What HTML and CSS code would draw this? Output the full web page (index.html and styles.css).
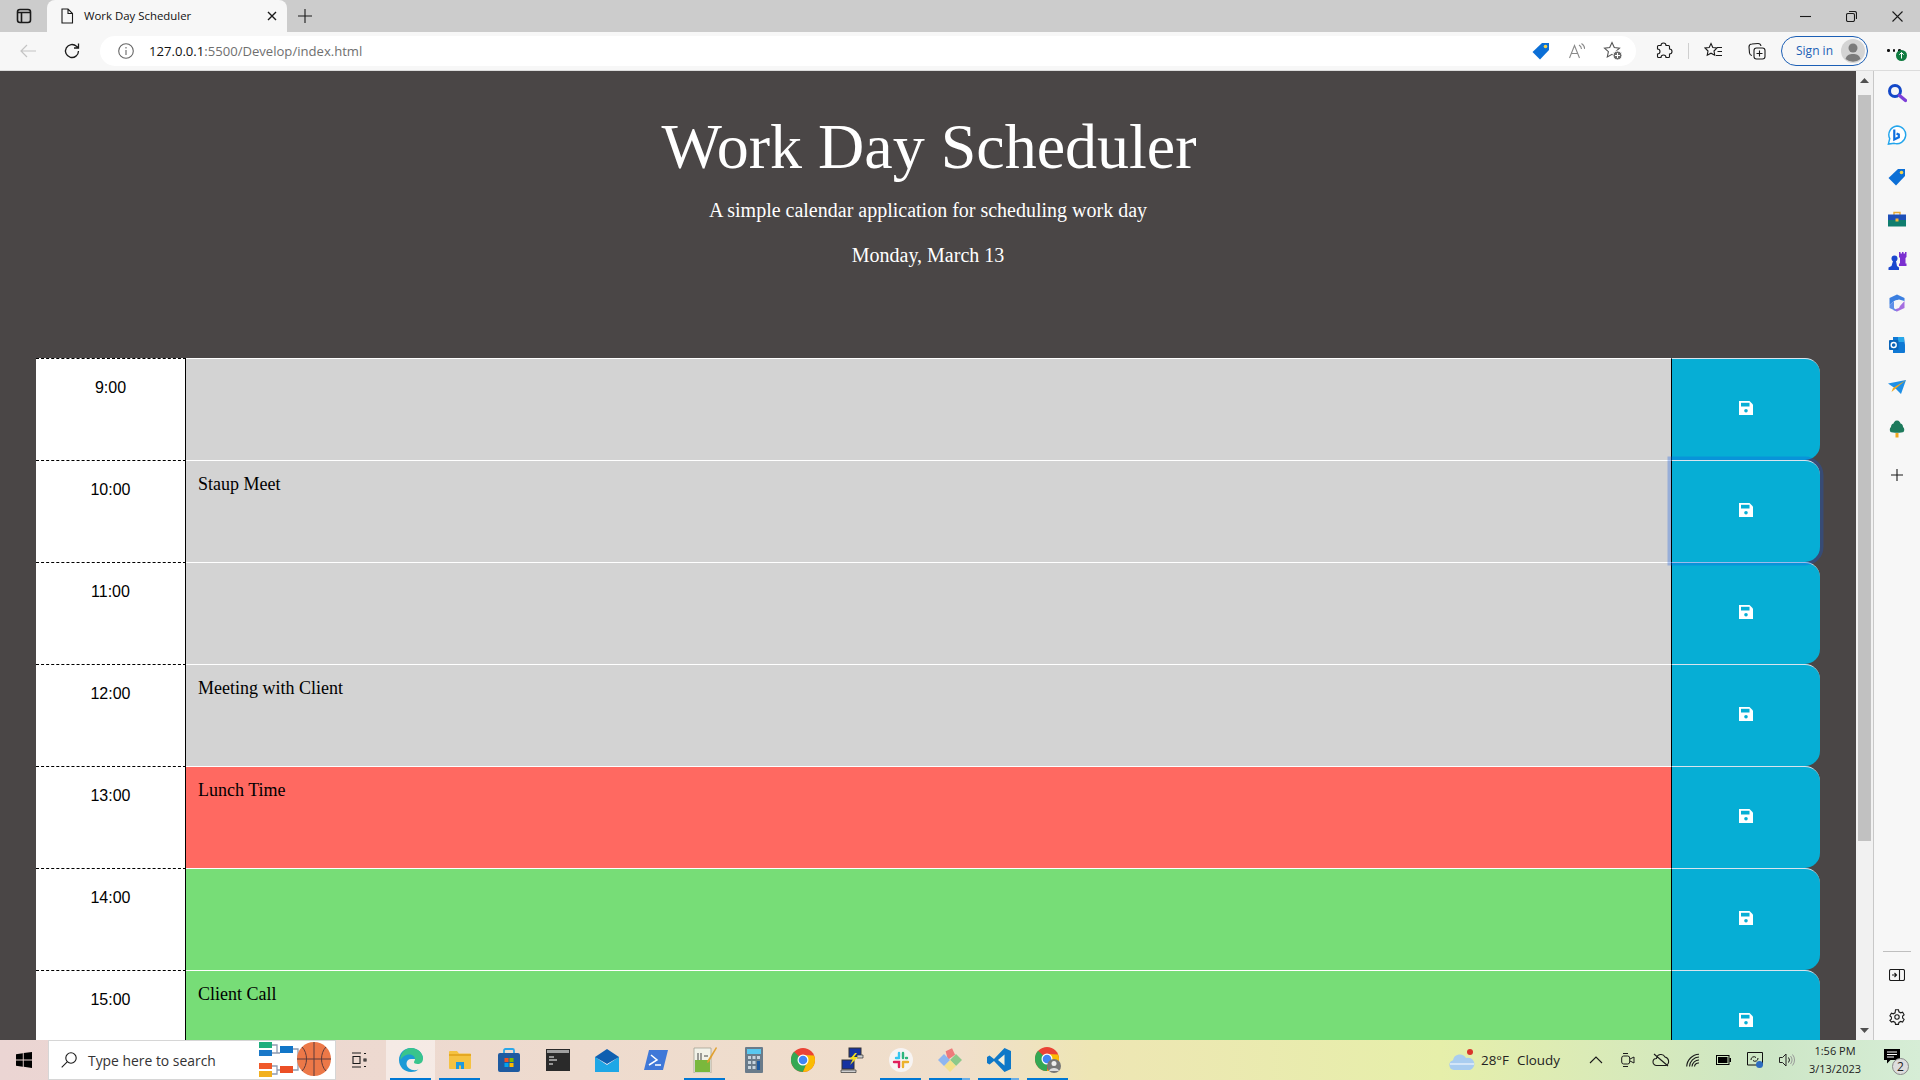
FILE: index.html
```html
<!DOCTYPE html>
<html lang="en">
<head>
<meta charset="utf-8">
<title>Work Day Scheduler</title>
<link rel="stylesheet" href="styles.css">
</head>
<body>
<div class="tabstrip">
  <div class="tab-side"><svg width="16" height="16" viewBox="0 0 16 16" class="line heavy"><rect x="1.500" y="1.500" width="13" height="13" rx="2.500"/><path d="M2 4.500h12M5.500 5v9" /></svg></div>
  <div class="tab">
    <svg width="14" height="16" viewBox="0 0 14 16" class="line"><path d="M2 1h6l4.500 4.500V15H2zM8 1v4.500h4.500"/></svg>
    <span class="tab-title">Work Day Scheduler</span>
    <svg class="tab-close line" width="10" height="10" viewBox="0 0 10 10"><path d="M1 1l8 8M9 1l-8 8"/></svg>
  </div>
  <svg class="tab-new line" width="14" height="14" viewBox="0 0 14 14"><path d="M7 0v14M0 7h14"/></svg>
  <div class="win-buttons">
    <svg width="11" height="11" viewBox="0 0 11 11" class="line"><path d="M0 5.500h11"/></svg>
    <svg width="11" height="11" viewBox="0 0 11 11" class="line"><rect x=".5" y="2.500" width="8" height="8" rx="1.500"/><path d="M3 .5h5.500a2 2 0 0 1 2 2V8"/></svg>
    <svg width="11" height="11" viewBox="0 0 11 11" class="line"><path d="M.5.5l10 10M10.500.5l-10 10"/></svg>
  </div>
</div>
<div class="toolbar">
  <svg class="tb-back" width="18" height="16" viewBox="0 0 18 16"><path d="M17 8H2M8 2L2 8l6 6"/></svg>
  <svg class="tb-reload line" width="18" height="18" viewBox="0 0 18 18"><path d="M15.500 9a6.500 6.500 0 1 1-2-4.700L15.500 6M15.500 1.500V6H11"/></svg>
  <div class="address">
    <svg class="addr-info" width="16" height="16" viewBox="0 0 16 16"><circle cx="8" cy="8" r="7.300"/><path d="M8 7v5M8 4v1.600"/></svg>
    <span class="url"><span class="url-host">127.0.0.1</span>:5500/Develop/index.html</span>
    <svg class="addr-tag" width="18" height="18" viewBox="0 0 18 18"><path d="M10 1h7v7l-9 9.500L.5 10z" fill="#0c6fd6"/><circle cx="13.500" cy="4.500" r="1.800" fill="#f5d24b"/></svg>
    <svg class="addr-read" width="16" height="16" viewBox="0 0 16 16"><path d="M.5 15L5.500 2.500 10.500 15M2.500 10.500h6M10 2a5 5 0 0 1 2.500 4M12.500.5A7 7 0 0 1 15.800 6"/></svg>
    <svg class="addr-fav" width="20" height="20" viewBox="0 0 20 20"><path class="star" d="M9 1.500l2.300 5 5.200.6-3.900 3.600 1.100 5.300-4.700-2.700-4.700 2.700 1.100-5.300L1.500 7.100l5.200-.6z"/><circle cx="14.500" cy="14.500" r="4.500" fill="#6a6a6a" stroke="#fff"/><path d="M14.500 12v5M12 14.500h5" stroke="#fff" fill="none"/></svg>
  </div>
  <svg class="tb-ext line" width="18" height="18" viewBox="0 0 18 18"><path d="M6 3.500a2.500 2.500 0 0 1 5 0h2.500a1 1 0 0 1 1 1V7a2.500 2.500 0 0 1 0 5v2.500a1 1 0 0 1-1 1H11a2.500 2.500 0 0 0-5 0H3.500a1 1 0 0 1-1-1V12a2.500 2.500 0 0 0 0-5V4.500a1 1 0 0 1 1-1z"/></svg>
  <span class="tb-sep"></span>
  <svg class="tb-favs line" width="19" height="18" viewBox="0 0 19 18"><path d="M7 1.500l1.800 4 4.200.5-3 3 .8 4.300L7 11.200l-3.800 2.100.8-4.300-3-3 4.200-.5zM13 5.500h5M13.500 9.500h4.500M12 13.500h6"/></svg>
  <svg class="tb-coll line" width="18" height="18" viewBox="0 0 18 18"><rect x="6" y="6" width="11" height="11" rx="2.500"/><path d="M11.500 8.500v6M8.500 11.500h6M4 13.500A3 3 0 0 1 1.500 11L1 5a3 3 0 0 1 3-3l6-.5a3 3 0 0 1 3 2.500"/></svg>
  <div class="signin"><span>Sign in</span><svg width="24" height="24" viewBox="0 0 24 24"><circle cx="12" cy="12" r="12" fill="#d4d4d4"/><circle cx="12" cy="9" r="4.500" fill="#7b7b7b"/><path d="M4.500 20c1-4 4-5 7.500-5s6.500 1 7.500 5a12 12 0 0 1-15 0z" fill="#7b7b7b"/></svg></div>
  <div class="tb-more"><i></i><i></i><i></i><svg class="update" width="11" height="11" viewBox="0 0 11 11"><circle cx="5.500" cy="5.500" r="5.500" fill="#107c41"/><path d="M5.500 8.500v-6M3.300 4.700l2.200-2.200 2.200 2.200" stroke="#fff" fill="none"/></svg></div>
</div>
<div class="viewport">
  <main class="page">
    <header class="jumbo">
      <h1 class="title">Work Day Scheduler</h1>
      <p class="lead">A simple calendar application for scheduling work day</p>
      <p class="date">Monday, March 13</p>
    </header>
    <section class="rows">
      <div class="row"><div class="hour">9:00</div><textarea class="note past"></textarea><button class="save"><svg class="disk" width="14" height="14" viewBox="0 0 14 14"><path d="M0 0h10.500L14 3.500V14H0z" fill="#fff"/><rect x="2" y="1.800" width="8.500" height="3.700" fill="#06aed5"/><circle cx="7" cy="9.700" r="1.800" fill="#06aed5"/></svg></button></div>
      <div class="row"><div class="hour">10:00</div><textarea class="note past">Staup Meet</textarea><button class="save focused"><svg class="disk" width="14" height="14" viewBox="0 0 14 14"><path d="M0 0h10.500L14 3.500V14H0z" fill="#fff"/><rect x="2" y="1.800" width="8.500" height="3.700" fill="#06aed5"/><circle cx="7" cy="9.700" r="1.800" fill="#06aed5"/></svg></button></div>
      <div class="row"><div class="hour">11:00</div><textarea class="note past"></textarea><button class="save"><svg class="disk" width="14" height="14" viewBox="0 0 14 14"><path d="M0 0h10.500L14 3.500V14H0z" fill="#fff"/><rect x="2" y="1.800" width="8.500" height="3.700" fill="#06aed5"/><circle cx="7" cy="9.700" r="1.800" fill="#06aed5"/></svg></button></div>
      <div class="row"><div class="hour">12:00</div><textarea class="note past">Meeting with Client</textarea><button class="save"><svg class="disk" width="14" height="14" viewBox="0 0 14 14"><path d="M0 0h10.500L14 3.500V14H0z" fill="#fff"/><rect x="2" y="1.800" width="8.500" height="3.700" fill="#06aed5"/><circle cx="7" cy="9.700" r="1.800" fill="#06aed5"/></svg></button></div>
      <div class="row"><div class="hour">13:00</div><textarea class="note present">Lunch Time</textarea><button class="save"><svg class="disk" width="14" height="14" viewBox="0 0 14 14"><path d="M0 0h10.500L14 3.500V14H0z" fill="#fff"/><rect x="2" y="1.800" width="8.500" height="3.700" fill="#06aed5"/><circle cx="7" cy="9.700" r="1.800" fill="#06aed5"/></svg></button></div>
      <div class="row"><div class="hour">14:00</div><textarea class="note future"></textarea><button class="save"><svg class="disk" width="14" height="14" viewBox="0 0 14 14"><path d="M0 0h10.500L14 3.500V14H0z" fill="#fff"/><rect x="2" y="1.800" width="8.500" height="3.700" fill="#06aed5"/><circle cx="7" cy="9.700" r="1.800" fill="#06aed5"/></svg></button></div>
      <div class="row"><div class="hour">15:00</div><textarea class="note future">Client Call</textarea><button class="save"><svg class="disk" width="14" height="14" viewBox="0 0 14 14"><path d="M0 0h10.500L14 3.500V14H0z" fill="#fff"/><rect x="2" y="1.800" width="8.500" height="3.700" fill="#06aed5"/><circle cx="7" cy="9.700" r="1.800" fill="#06aed5"/></svg></button></div>
    </section>
  </main>
  <div class="scrollbar">
    <svg class="arrow-up" width="9" height="5" viewBox="0 0 9 5"><path d="M4.500 0L9 5H0z" fill="#505050"/></svg>
    <div class="thumb"></div>
    <svg class="arrow-down" width="9" height="5" viewBox="0 0 9 5"><path d="M0 0h9L4.500 5z" fill="#505050"/></svg>
  </div>
  <aside class="sidebar">
    <svg width="20" height="20" viewBox="0 0 20 20"><circle cx="8" cy="8" r="5.500" fill="none" stroke="#1348c8" stroke-width="3"/><path d="M12.500 12.500l6 5" stroke="#7d3fd8" stroke-width="3.400" stroke-linecap="round"/></svg>
    <svg width="22" height="22" viewBox="0 0 22 22"><path d="M11 1a9.800 9.800 0 1 1-3 19.200L1.500 21 3 15A9.800 9.800 0 0 1 11 1z" fill="#fff" stroke="#23a5ec" stroke-width="1.600"/><path d="M8 5v11l5-2.500v-3L10.500 9.500" fill="none" stroke="#0f6fe0" stroke-width="2.400"/></svg>
    <svg width="18" height="18" viewBox="0 0 18 18"><path d="M10 1h7v7l-9 9.500L.5 10z" fill="#0c6fd6"/><circle cx="13.500" cy="4.500" r="1.800" fill="#f5d24b"/></svg>
    <svg width="18" height="16" viewBox="0 0 18 16"><path d="M6 4V1.500h6V4" fill="none" stroke="#e8a832" stroke-width="1.400"/><rect y="3.500" width="18" height="6" fill="#1d4fb8"/><rect y="9" width="18" height="6.500" fill="#0f7d6e"/><rect x="7.500" y="7.500" width="3" height="3" fill="#f3b83b"/></svg>
    <svg width="19" height="20" viewBox="0 0 19 20"><path d="M11 1h1.500v1.500H14V1h1.500v1.500H17V1h1.500v5l-1 1v5.500h1V15H11v-2.500h1V7l-1-1z" fill="#7b2fd0"/><circle cx="6.500" cy="7.500" r="3" fill="#1a47cf"/><path d="M5 10h3l1 5 2 1.500V19H.5v-2.500l3-1.500z" fill="#1a47cf"/></svg>
    <svg width="16" height="18" viewBox="0 0 16 18"><path d="M8 .5L15.500 4v3L10 5.500 5 7l-4.500 4V4z" fill="#3b7fe0"/><path d="M15.500 7v7L8 17.500 4 16l6-2 1-2z" fill="#a56ee0"/><path d="M.5 11L5 7v7l3 3.500L.5 14z" fill="#5f8fe8"/><circle cx="8" cy="9" r="2.800" fill="#f7f7f7"/></svg>
    <svg width="16" height="16" viewBox="0 0 16 16"><path d="M4 0h11l1 8v7a1 1 0 0 1-1 1H4z" fill="#0f78d4"/><path d="M9 0h6v5H9z" fill="#28a8ea"/><rect y="3" width="9.500" height="10" rx="1" fill="#0a64b8"/><circle cx="4.700" cy="8" r="2.500" fill="none" stroke="#fff" stroke-width="1.400"/></svg>
    <svg width="18" height="14" viewBox="0 0 18 14"><path d="M0 3.500L18 0 13 14 8 9z" fill="#1e8fe6"/><path d="M18 0L5 8l-1.500 4z" fill="#f0a81e"/></svg>
    <svg width="16" height="18" viewBox="0 0 16 18"><path d="M8 .5c2.500 0 3 2 3.500 3 2 .5 2.500 2.500 2.500 3.500 1.500 1 1.700 3.600.5 5-1 1-11.500 1-13 0C.5 10.600.5 8 2 7c0-1 .5-3 2.500-3.500C5 2.500 5.500.5 8 .5z" fill="#1d7a5c"/><rect x="6.500" y="13" width="3" height="4.500" fill="#f0a81e"/></svg>
    <svg class="line side-plus" width="12" height="12" viewBox="0 0 12 12"><path d="M6 0v12M0 6h12"/></svg>
    <span class="side-sep"></span>
    <svg class="line side-panel" width="16" height="12" viewBox="0 0 16 12"><rect x=".5" y=".5" width="15" height="11" rx="1.500"/><path d="M10.500 1v10M3 6h4.500M5.500 4l2 2-2 2"/></svg>
    <svg class="line side-gear" width="16" height="16" viewBox="0 0 16 16"><circle cx="8" cy="8" r="2.200"/><path d="M6.500.8h3l.4 2 1.800 1 1.900-.6 1.500 2.600-1.500 1.300v2l1.500 1.300-1.500 2.600-1.900-.6-1.800 1-.4 2h-3l-.4-2-1.800-1-1.900.6L.9 11.400l1.500-1.300v-2L.9 6.800l1.500-2.600 1.900.6 1.800-1z"/></svg>
  </aside>
</div>
<footer class="taskbar">
  <div class="start"><svg width="16" height="16" viewBox="0 0 16 16"><path d="M0 2.300l6.800-1V7.600H0zM7.700 1.100L16 0v7.600H7.700zM0 8.400h6.800v6.300l-6.800-1zM7.700 8.400H16V16l-8.300-1.200z" fill="#000"/></svg></div>
  <div class="search">
    <svg class="line" width="16" height="16" viewBox="0 0 16 16"><circle cx="10" cy="6" r="5.200"/><path d="M6.200 9.800L.7 15.300"/></svg>
    <span class="search-text">Type here to search</span>
    <svg class="bracket" width="72" height="36" viewBox="0 0 72 36"><rect width="13" height="6" fill="#1fae7e"/><rect y="8" width="13" height="6" fill="#1a78c8"/><rect y="21" width="13" height="6" fill="#f0592a"/><rect y="29" width="13" height="6" fill="#f2b01e"/><rect x="21" y="4" width="13" height="7" fill="#1276c8"/><rect x="21" y="24" width="13" height="7" fill="#ec4f25"/><path d="M13 3h5v8h3M13 11h5M13 24h5v8M13 32h5v-4h3M34 7h5v21h-5M39 17h4" fill="none" stroke="#8f9bb0" stroke-width="1.300"/><circle cx="55" cy="17" r="17" fill="#ec7848"/><path d="M38 17h34M55 0v34M43 5c6 6 6 18 0 24M67 5c-6 6-6 18 0 24" fill="none" stroke="#5c3a3a" stroke-width="1"/></svg>
  </div>
  <div class="task-item task-view"><svg class="line" width="16" height="16" viewBox="0 0 16 16"><path d="M1 1h9M1 15h9M2 4.500h7v7H2zM13 1.500h2M13 7h2v2h-2zM13 14.500h2"/></svg></div>
  <div class="apps">
    <div class="task-item active"><svg width="24" height="24" viewBox="0 0 24 24"><path d="M12 0C5 0 0 5.500 0 12c0 7 5.500 12 12 12 3 0 5.500-.8 7.500-2.500-6 2-12-1-12-6 0-2.500 2-4.500 4.500-4.500H24C24 5 19 0 12 0z" fill="#1b9ad6"/><path d="M12 0c7 0 12 5 12 11 0 3-2.500 5-5.500 5-2 0-3.500-.8-3.500-1.500 0-1.500 1-2 1-3.500 0-2-2-4.500-5.500-4.500C6 6.500 3 9 1.500 12 1 5 6 0 12 0z" fill="#39c48c"/></svg></div>
    <div class="task-item running"><svg width="22" height="18" viewBox="0 0 22 18"><path d="M0 1a1 1 0 0 1 1-1h7l2 2.500h11a1 1 0 0 1 1 1V17a1 1 0 0 1-1 1H1a1 1 0 0 1-1-1z" fill="#f5c242"/><path d="M0 3h22v2H0z" fill="#e5a823"/><path d="M7 18v-7h8v7h-3v-3.500h-2V18z" fill="#1f9ae0"/></svg></div>
    <div class="task-item"><svg width="22" height="24" viewBox="0 0 22 24"><path d="M6 6V2.500A1.500 1.500 0 0 1 7.500 1h7A1.500 1.500 0 0 1 16 2.500V6" fill="none" stroke="#2aa7e8" stroke-width="1.800"/><rect y="5" width="22" height="19" rx="2" fill="#1e5aa0"/><rect x="6.500" y="10" width="4" height="4" fill="#f25022"/><rect x="11.500" y="10" width="4" height="4" fill="#7fba00"/><rect x="6.500" y="15" width="4" height="4" fill="#00a4ef"/><rect x="11.500" y="15" width="4" height="4" fill="#ffb900"/></svg></div>
    <div class="task-item"><svg width="24" height="22" viewBox="0 0 24 22"><rect width="24" height="22" fill="#2a2a2a"/><rect x="1" y="1" width="22" height="3" fill="#a0a0a0"/><path d="M3 8h5M3 11h8M3 15h4" stroke="#fff" stroke-width="1.200"/></svg></div>
    <div class="task-item"><svg width="24" height="24" viewBox="0 0 24 24"><path d="M12 1l12 8v14H0V9z" fill="#0f5fb0"/><path d="M0 9l12 8 12-8v15H0z" fill="#1ea7e6"/><path d="M0 9l12 7 12-7-12 8z" fill="#fff"/></svg></div>
    <div class="task-item"><svg width="24" height="20" viewBox="0 0 24 20"><path d="M5 0h19l-5 20H0z" fill="#3f78d8"/><path d="M7 5l6 5-8 5M11 15h6" fill="none" stroke="#fff" stroke-width="1.500"/></svg></div>
    <div class="task-item running"><svg width="24" height="26" viewBox="0 0 24 26"><path d="M1 1h17v25H1z" fill="#f2f2e8" stroke="#9a9a8a" stroke-width=".7"/><path d="M2 13h15v12H2z" fill="#7ab83c"/><path d="M5 6v7M8 6v7M11 9h4" stroke="#444"/><path d="M23 0l1 1-8 14-2 1 .5-2.500z" fill="#e0a030"/></svg></div>
    <div class="task-item"><svg width="18" height="26" viewBox="0 0 18 26"><rect width="18" height="26" rx="1" fill="#6a7b8a"/><rect x="2" y="2" width="14" height="5" fill="#59c8f0"/><path d="M3 9h3v3H3zM7.500 9h3v3h-3zM12 9h3v3h-3zM3 14h3v3H3zM7.500 14h3v3h-3zM3 19h3v3H3zM7.500 19h3v3h-3z" fill="#c7d4de"/><rect x="12" y="14" width="3" height="9" fill="#1e5aa0"/></svg></div>
    <div class="task-item"><svg width="24" height="24" viewBox="0 0 24 24"><circle cx="12" cy="12" r="12" fill="#ea4335"/><path d="M12 12L1.600 18A12 12 0 0 1 3 3.800z" fill="#34a853"/><path d="M12 24a12 12 0 0 1-10.400-6L7 12h5l5 0-5 12z" fill="#34a853"/><path d="M12 24a12 12 0 0 0 12-12c0-1.500-.3-3-.9-4.400L12 7l5 5z" fill="#fbbc04"/><circle cx="12" cy="12" r="5.500" fill="#fff"/><circle cx="12" cy="12" r="4.300" fill="#4285f4"/></svg></div>
    <div class="task-item"><svg width="24" height="26" viewBox="0 0 24 26"><rect x="9" y="1" width="12" height="9" fill="#1633a0" stroke="#333"/><rect x="2" y="13" width="12" height="9" fill="#1633a0" stroke="#333"/><path d="M1 23h15v2.500H1zM17 8h6v3h-6z" fill="#cfcfcf" stroke="#333" stroke-width=".7"/><path d="M15 6l-5 6h3l-3 6 8-8h-4l3-4z" fill="#f6e01e"/></svg></div>
    <div class="task-item running"><svg width="24" height="24" viewBox="0 0 24 24"><circle cx="12" cy="12" r="12" fill="#f7f4f3"/><path d="M10 5v4M7 10h3" stroke="#36c5f0" stroke-width="2.400" stroke-linecap="round"/><path d="M14 5v5M17 10h1" stroke="#2eb67d" stroke-width="2.400" stroke-linecap="round"/><path d="M14 14v5M14 14h5" stroke="#ecb22e" stroke-width="2.400" stroke-linecap="round"/><path d="M5 14h5v5" stroke="#e01e5a" stroke-width="2.400" stroke-linecap="round" fill="none"/></svg></div>
    <div class="task-item running split"><svg width="24" height="24" viewBox="0 0 24 24"><path d="M12 0l5 5-5 7-5-7z" transform="rotate(20 12 6)" fill="#ee7a7a"/><path d="M18 6l6 6-6 6-6-6z" fill="#8cc98a"/><path d="M12 12l6 6-6 6-6-6z" fill="#f4e08a"/><path d="M6 6l6 6-6 6-6-6z" fill="#8fb6f0"/></svg></div>
    <div class="task-item running split"><svg width="24" height="24" viewBox="0 0 24 24"><path d="M17.500 0L24 3v18l-6.500 3L7 13l-4.500 3.500L0 15V9l2.500-1.500L7 11z" fill="#0e78c8"/><path d="M17.500 6.500L11 12l6.500 5.500z" fill="#f4efdc"/></svg></div>
    <div class="task-item running"><svg width="26" height="26" viewBox="0 0 26 26"><circle cx="12" cy="12" r="12" fill="#ea4335"/><path d="M12 12L1.600 18A12 12 0 0 1 3 3.800zM12 24a12 12 0 0 1-10.400-6L7 12h5z" fill="#34a853"/><path d="M12 24a12 12 0 0 0 12-12c0-1.500-.3-3-.9-4.400L12 7l5 5z" fill="#fbbc04"/><circle cx="12" cy="12" r="5.500" fill="#fff"/><circle cx="12" cy="12" r="4.300" fill="#4285f4"/><circle cx="19" cy="19" r="7" fill="#777"/><circle cx="19" cy="16.500" r="2.500" fill="#eee"/><path d="M14 24c1-4 9-4 10 0z" fill="#ddd"/></svg></div>
  </div>
  <div class="tray">
    <svg class="tray-cloud" width="26" height="22" viewBox="0 0 26 22"><path d="M5 21a5 5 0 0 1-1-9.800A7 7 0 0 1 17 9a5.500 5.500 0 0 1 4 12z" fill="#a9cdf0"/><path d="M1 14h24v2H1z" fill="#fff" opacity=".5"/><circle cx="21" cy="3" r="3" fill="#d9342b"/></svg>
    <span class="weather"><span>28°F</span><span>Cloudy</span></span>
    <svg class="line tray-chev" width="14" height="8" viewBox="0 0 14 8"><path d="M1 7l6-6 6 6"/></svg>
    <svg class="line tray-meet" width="14" height="16" viewBox="0 0 14 16"><path d="M2 1.500h5M2 14.500h5"/><rect x=".7" y="4" width="8" height="8" rx="2"/><path d="M9 7l4-2v6l-4-2"/></svg>
    <svg class="line tray-cam" width="18" height="14" viewBox="0 0 18 14"><path d="M4.500 12.500a3.500 3.500 0 0 1 0-7 4.500 4.500 0 0 1 8.500-1.500 4.500 4.500 0 0 1 1 8.500zM2 1l14 12"/></svg>
    <svg class="line tray-wifi" width="14" height="14" viewBox="0 0 14 14"><path d="M.7 13.500A13 13 0 0 1 13 1.200M3.500 13.500A10 10 0 0 1 13 4M6 13.500A7 7 0 0 1 13 7M8.500 13.500A4 4 0 0 1 13 10"/></svg>
    <svg class="tray-batt" width="15" height="10" viewBox="0 0 15 10"><rect x=".5" y=".5" width="12.500" height="9" fill="none" stroke="#000"/><rect x="2" y="2" width="9.500" height="6"/><rect x="13.500" y="3" width="1.500" height="4"/></svg>
    <svg class="tray-sync" width="16" height="16" viewBox="0 0 16 16"><path class="sync" d="M.5.500h15v12.500H.5zM4 8a3 3 0 0 1 5-2.500M11 6a3 3 0 0 1-5 2.500"/><circle cx="12.500" cy="12.500" r="3.500" fill="#2d6cc0"/></svg>
    <svg class="tray-vol" width="17" height="14" viewBox="0 0 17 14"><path class="vol" d="M.5 4.500h3L7 1v12L3.500 9.500h-3z"/><path d="M9.500 4.500a4 4 0 0 1 0 5" class="vol"/><path d="M11.500 3a6.500 6.500 0 0 1 0 8M13.500 1.500a8.500 8.500 0 0 1 0 11" class="vol faint"/></svg>
    <div class="clock"><span>1:56 PM</span><span>3/13/2023</span></div>
    <div class="notify"><svg width="16" height="15" viewBox="0 0 16 15"><path d="M0 0h16v11H6.500L3 14.500V11H0z"/><path d="M3 3h10M3 5.500h10M3 8h7" stroke="#fff"/></svg><span class="badge">2</span></div>
  </div>
</footer>
</body>
</html>
```
FILE: styles.css
```css
* { box-sizing: border-box; }
html, body { margin: 0; height: 100%; }
body { display: flex; flex-direction: column; height: 1080px; overflow: hidden; font-family: "Open Sans", "Noto Sans", sans-serif; color: #000; }
svg { display: block; flex: none; }
.line { fill: none; stroke: #1a1a1a; stroke-width: 1.100; }
.heavy { stroke-width: 1.600; }

.tabstrip { height: 32px; flex: none; background: #ccc; display: flex; align-items: center; }
.tab-side { width: 47px; display: flex; justify-content: center; }
.tab { width: 240px; height: 32px; background: #f7f7f7; border-radius: 8px 8px 0 0; display: flex; align-items: center; padding: 0 10px 0 13px; }
.tab-title { font-size: 11.400px; margin-left: 10px; padding-bottom: 1px; flex: 1; color: #111; white-space: nowrap; }
.tab-close { stroke-width: 1.400; }
.tab-new { margin-left: 11px; }
.win-buttons { margin-left: auto; display: flex; gap: 35px; padding-right: 17px; align-items: center; }

.toolbar { height: 39px; flex: none; background: #f7f7f7; border-bottom: 1px solid #dcdcdc; display: flex; align-items: center; padding: 0 0 1px 19px; }
.tb-back { fill: none; stroke: #c4c4c4; stroke-width: 1.200; }
.tb-reload { margin-left: 26px; stroke-width: 1.300; }
.address { margin-left: 19px; width: 1536px; height: 30px; border-radius: 15px; background: #fff; display: flex; align-items: center; padding: 0 13px 0 18px; }
.addr-info { fill: none; stroke: #666; stroke-width: 1.100; }
.url { margin-left: 15px; font-size: 13.100px; color: #6f6f6f; flex: 1; }
.url-host { color: #111; }
.addr-read { fill: none; stroke: #8a8a8a; stroke-width: 1.100; margin: 0 18px 0 19px; }
.star { fill: none; stroke: #555; stroke-width: 1.100; }
.tb-ext { margin-left: 19px; }
.tb-sep { width: 1px; height: 16px; background: #cfcfcf; margin-left: 15px; }
.tb-favs { margin-left: 15px; }
.tb-coll { margin-left: 25px; }
.signin { margin-left: 15px; width: 87px; height: 30px; border: 1px solid #1c5fb5; border-radius: 15px; display: flex; align-items: center; justify-content: space-between; padding: 0 2px 0 14px; font-size: 12px; color: #1c5fb5; }
.tb-more { margin-left: 19px; display: flex; gap: 3px; position: relative; }
.tb-more i { width: 2.500px; height: 2.500px; background: #111; border-radius: 50%; }
.update { position: absolute; left: 9px; top: 1px; }

.viewport { flex: 1; min-height: 0; display: flex; }
.page { flex: 1; min-width: 0; background: #4a4646; overflow: hidden; padding: 0 36px; color: #fff; }
.jumbo { height: 287px; text-align: center; padding: 37px 0 0 2px; font-family: "Liberation Serif", "Times New Roman", serif; }
.title { margin: 0; font-size: 64px; font-weight: 400; line-height: 77px; }
.lead { margin: 13px 0 0 -2px; font-size: 20px; line-height: 24px; }
.date { margin: 21px 0 0 -2px; font-size: 20px; line-height: 24px; }
.rows { display: flex; flex-direction: column; }
.row { height: 102px; flex: none; display: flex; }
.hour { width: 150px; background: #fff; color: #000; border-top: 1px dashed #000; border-right: 1px solid #000; font: 16px/20px "Liberation Sans", Arial, sans-serif; text-align: center; padding-top: 19px; }
.note { flex: 1; min-width: 0; height: 102px; border: 0; border-top: 1px solid #fff; border-radius: 0; padding: 13px 12px 0; font: 18px/21px "Liberation Serif", "Times New Roman", serif; color: #000; resize: none; overflow: hidden; outline: 0; }
.past { background: #d3d3d3; }
.present { background: #ff6961; }
.future { background: #77dd77; }
.save { width: 149px; height: 102px; flex: none; border: 0; border-left: 1px solid #000; border-top: 1px solid #d8e4ee; border-radius: 0 15px 15px 0; background: #06aed5; padding: 0 0 3px; display: flex; align-items: center; justify-content: center; }
.focused { box-shadow: 0 0 0 3.500px rgba(13, 90, 230, .3); position: relative; }

.scrollbar { width: 18px; flex: none; background: #f1f1f1; border-right: 1px solid #c8c8c8; display: flex; flex-direction: column; align-items: center; padding: 0 1px; }
.arrow-up { margin-top: 7px; }
.thumb { width: 13px; height: 746px; background: #c1c1c1; margin-top: 12px; }
.arrow-down { margin-top: auto; margin-bottom: 7px; }

.sidebar { width: 46px; flex: none; background: #f7f7f7; display: flex; flex-direction: column; align-items: center; padding-top: 12px; }
.sidebar > svg { height: 20px; margin-bottom: 22px; }
.sidebar > .side-plus { margin-top: 8px; height: 12px; margin-bottom: 0; }
.side-sep { width: 28px; height: 1px; background: #bfbfbf; margin-top: auto; margin-bottom: 17px; }
.sidebar > .side-panel { height: 12px; margin-bottom: 28px; }
.sidebar > .side-gear { height: 16px; margin-bottom: 15px; }

.taskbar { height: 40px; flex: none; display: flex; align-items: center; background: linear-gradient(90deg, #ebd5d3 0%, #f0dfcb 50%, #eee6b4 57%, #e6efaa 75%, #cde6c6 92%, #d6edd6 100%); }
.start { width: 48px; display: flex; justify-content: center; }
.search { width: 288px; height: 40px; background: #fff; border: 1px solid #d6d6d6; display: flex; align-items: center; padding-left: 12px; }
.search-text { margin-left: 11px; font-size: 13.900px; color: #333; white-space: nowrap; }
.bracket { margin-left: auto; margin-right: 4px; }
.task-item { width: 49px; height: 40px; flex: none; display: flex; align-items: center; justify-content: center; position: relative; }
.task-view { width: 50px; padding-right: 4px; }
.apps { display: flex; }
.active { background: rgba(255,255,255,.45); }
.active::after, .running::after { content: ""; position: absolute; left: 4px; right: 4px; bottom: 0; height: 2px; background: #0078d4; }
.split::after { background: linear-gradient(90deg, #0078d4 80%, #6aaee6 80%); }
.tray { margin-left: auto; display: flex; align-items: center; font-size: 13.400px; color: #222; height: 40px; padding-right: 10px; }
.tray-cloud { margin-right: 6px; }
.weather { display: flex; gap: 8px; width: 108px; white-space: nowrap; }
.tray-chev { margin-right: 18px; }
.tray-meet { margin-right: 17px; stroke-width: 1; }
.tray-cam { margin-right: 16px; }
.tray-wifi { margin-right: 16px; }
.tray-batt { margin-right: 16px; }
.tray-sync { margin-right: 16px; }
.sync { fill: none; stroke: #111; }
.vol { fill: none; stroke: #222; }
.faint { stroke: #999; }
.clock { display: flex; flex-direction: column; align-items: center; font-size: 11px; line-height: 18px; margin-left: 5px; width: 68px; }
.notify { position: relative; margin-left: 15px; width: 26px; height: 30px; padding-top: 4px; }
.badge { position: absolute; left: 8px; top: 13px; width: 17px; height: 17px; border-radius: 50%; background: #ddd; border: 1px solid #888; font-size: 12px; line-height: 15px; text-align: center; color: #222; }
```
